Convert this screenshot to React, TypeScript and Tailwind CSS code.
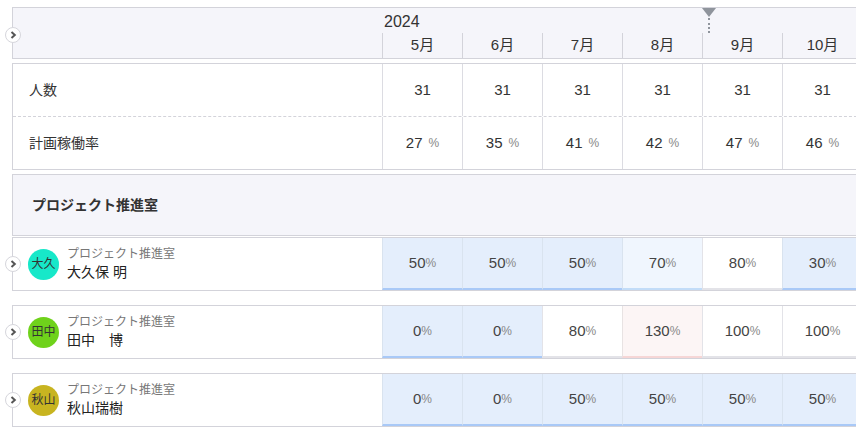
import React from "react";

const months = ["5月", "6月", "7月", "8月", "9月", "10月"];
const heads = [31, 31, 31, 31, 31, 31];
const rates = [27, 35, 41, 42, 47, 46];

type Tone = "blue" | "light" | "white" | "pink";

const people: { short: string; name: string; color: string; cells: [number, Tone][] }[] = [
  {
    short: "大久",
    name: "大久保 明",
    color: "bg-[#17e8c9]",
    cells: [[50, "blue"], [50, "blue"], [50, "blue"], [70, "light"], [80, "white"], [30, "blue"]],
  },
  {
    short: "田中",
    name: "田中　博",
    color: "bg-[#6fd21b]",
    cells: [[0, "blue"], [0, "blue"], [80, "white"], [130, "pink"], [100, "white"], [100, "white"]],
  },
  {
    short: "秋山",
    name: "秋山瑞樹",
    color: "bg-[#c8b420]",
    cells: [[0, "blue"], [0, "blue"], [50, "blue"], [50, "blue"], [50, "blue"], [50, "blue"]],
  },
];

const toneClass: Record<Tone, string> = {
  blue: "bg-[#e4eefc] border-b-[#a9c9f7] border-l-[#d9e3ef]",
  light: "bg-[#f0f6fe] border-b-[#c2dcf8] border-l-[#d9e3ef]",
  white: "bg-white border-b-[#e3e3e8] border-l-[#e3e3e8]",
  pink: "bg-[#fcf5f5] border-b-[#f6d6d6] border-l-[#e8e3e3]",
};

const Toggle = ({ top }: { top: string }) => (
  <div
    className={`absolute left-[-8px] ${top} w-[16px] h-[16px] rounded-full bg-white border border-[#d6d6dc] flex items-center justify-center`}
  >
    <svg width="7" height="8" viewBox="0 0 7 8">
      <path d="M1.5 1 L4.8 4 L1.5 7" fill="none" stroke="#555" strokeWidth="2" />
    </svg>
  </div>
);

export default function App() {
  return (
    <div
      className="w-[856px] h-[439px] overflow-hidden bg-white pt-[7px] pl-[12px] text-[#333]"
      style={{ fontFamily: '"Liberation Sans", "Noto Sans CJK JP", sans-serif' }}
    >
      <div className="w-[870px] flex flex-col">
        {/* header */}
        <div className="relative flex h-[52px] bg-[#f5f5fa] border-y border-l border-[#d3d3da]">
          <Toggle top="top-[19px]" />
          <div className="w-[369px] shrink-0" />
          <div className="flex flex-col">
            <div className="h-[25px] pl-[2px] pt-[5px] text-[16px] leading-[18px]">2024</div>
            <div className="flex h-[25px]">
              {months.map((m) => (
                <div
                  key={m}
                  className="w-[80px] shrink-0 border-l border-[#d3d3da] flex items-center justify-center text-[15px]"
                >
                  {m}
                </div>
              ))}
            </div>
          </div>
          <div className="absolute left-[689px] top-0 flex flex-col items-center">
            <div className="w-0 h-0 border-l-[7px] border-r-[7px] border-t-[9px] border-l-transparent border-r-transparent border-t-[#8f949c]" />
            <div className="h-[15px] border-l-2 border-dotted border-[#8f949c] mt-[1px]" />
          </div>
        </div>

        {/* summary */}
        <div className="mt-[4px] flex flex-col border-y border-l border-[#d3d3da] bg-white">
          <div className="flex h-[53px] border-b border-dashed border-[#d3d3da]">
            <div className="w-[369px] shrink-0 flex items-center pl-[16px] text-[14px]">人数</div>
            {heads.map((h, i) => (
              <div
                key={i}
                className="w-[80px] shrink-0 border-l border-[#dcdce2] flex items-center justify-center text-[15px]"
              >
                {h}
              </div>
            ))}
          </div>
          <div className="flex h-[52px]">
            <div className="w-[369px] shrink-0 flex items-center pl-[16px] text-[14px]">計画稼働率</div>
            {rates.map((r, i) => (
              <div
                key={i}
                className="w-[80px] shrink-0 border-l border-[#dcdce2] flex items-center justify-center text-[15px]"
              >
                {r}
                <span className="ml-[6px] text-[12px] text-[#888]">%</span>
              </div>
            ))}
          </div>
        </div>

        {/* department */}
        <div className="mt-[4px] h-[62px] flex items-center bg-[#f5f5fa] border-y border-l border-[#d3d3da] pl-[19px] text-[14px] font-bold">
          プロジェクト推進室
        </div>

        {/* members */}
        <div className="mt-[1px] flex flex-col gap-[14px]">
          {people.map((p) => (
            <div key={p.name} className="relative flex h-[54px] border-y border-l border-[#d3d3da] bg-white">
              <Toggle top="top-[18px]" />
              <div className="w-[369px] shrink-0 flex items-center pl-[15px] gap-[8px]">
                <div
                  className={`w-[31px] h-[31px] rounded-full ${p.color} flex items-center justify-center text-[12px] text-[#333]`}
                >
                  {p.short}
                </div>
                <div className="flex flex-col">
                  <span className="text-[12px] leading-[16px] text-[#777]">プロジェクト推進室</span>
                  <span className="text-[14px] leading-[20px] text-[#222]">{p.name}</span>
                </div>
              </div>
              {p.cells.map(([v, t], i) => (
                <div
                  key={i}
                  className={`w-[80px] shrink-0 border-l border-b-2 flex items-center justify-center text-[15px] text-[#444] ${toneClass[t]} ${i === 0 ? "border-l-[#d3d3da]" : ""}`}
                >
                  {v}
                  <span className="text-[12px] text-[#888]">%</span>
                </div>
              ))}
            </div>
          ))}
        </div>
      </div>
    </div>
  );
}
